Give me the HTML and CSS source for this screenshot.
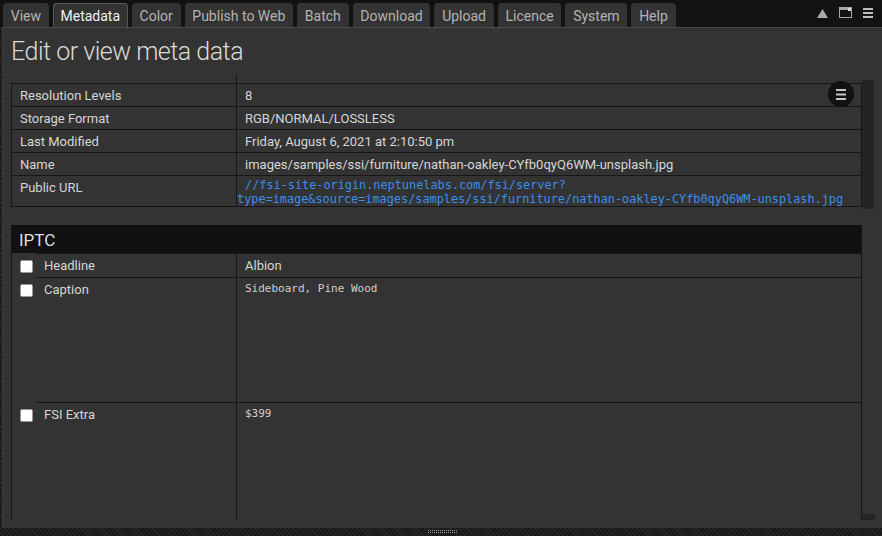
FILE: index.html
```html
<!DOCTYPE html>
<html lang="en">
<head>
<meta charset="utf-8">
<title>Metadata</title>
<link rel="stylesheet" href="styles.css">
</head>
<body>
<div class="app">
  <header class="topbar">
    <nav class="tabs">
      <div class="tab">View</div>
      <div class="tab active">Metadata</div>
      <div class="tab">Color</div>
      <div class="tab">Publish to Web</div>
      <div class="tab">Batch</div>
      <div class="tab">Download</div>
      <div class="tab">Upload</div>
      <div class="tab">Licence</div>
      <div class="tab">System</div>
      <div class="tab">Help</div>
    </nav>
    <div class="tools">
      <svg class="ico-up" width="11" height="9" viewBox="0 0 11 9"><polygon points="5.5,0 11,9 0,9" fill="#a8a8a8"/></svg>
      <svg class="ico-win" width="13" height="11" viewBox="0 0 13 11"><rect x="0.5" y="0.5" width="12" height="10" fill="none" stroke="#a8a8a8"/><rect x="0" y="0" width="13" height="3" fill="#a8a8a8"/><rect x="9" y="1" width="3" height="3" fill="#dcdcdc"/></svg>
      <svg class="ico-menu" width="10" height="10" viewBox="0 0 10 10"><rect x="0" y="0" width="10" height="2" fill="#bdbdbd"/><rect x="0" y="4" width="10" height="2" fill="#bdbdbd"/><rect x="0" y="8" width="10" height="2" fill="#bdbdbd"/></svg>
    </div>
  </header>

  <main class="panel">
    <h1 class="title">Edit or view meta data</h1>
    <div class="scroller">
      <div class="content">
        <div class="stub"></div>
        <div class="props">
          <div class="prow"><div class="pkey">Resolution Levels</div><div class="pval">8</div></div>
          <div class="prow"><div class="pkey">Storage Format</div><div class="pval">RGB/NORMAL/LOSSLESS</div></div>
          <div class="prow"><div class="pkey">Last Modified</div><div class="pval">Friday, August 6, 2021 at 2:10:50 pm</div></div>
          <div class="prow"><div class="pkey">Name</div><div class="pval">images/samples/ssi/furniture/nathan-oakley-CYfb0qyQ6WM-unsplash.jpg</div></div>
          <div class="prow url-row"><div class="pkey">Public URL</div><div class="pval"><a class="url" href="#"><span class="url-line first">//fsi-site-origin.neptunelabs.com/fsi/server?</span><span class="url-line">type=image&amp;source=images/samples/ssi/furniture/nathan-oakley-CYfb0qyQ6WM-unsplash.jpg</span></a></div></div>
        </div>

        <section class="iptc">
          <div class="iptc-head">IPTC</div>
          <div class="irow short">
            <div class="icb"><input type="checkbox" class="cb"></div>
            <div class="ilabel">Headline</div>
            <div class="ivalue">Albion</div>
          </div>
          <div class="irow tall">
            <div class="icb"><input type="checkbox" class="cb"></div>
            <div class="ilabel">Caption</div>
            <div class="ivalue mono">Sideboard, Pine Wood</div>
          </div>
          <div class="irow rest">
            <div class="icb"><input type="checkbox" class="cb"></div>
            <div class="ilabel">FSI Extra</div>
            <div class="ivalue mono">$399</div>
          </div>
        </section>
      </div>
      <div class="scrollbar">
        <div class="thumb"></div>
        <div class="sb-end"></div>
      </div>
      <button class="menu-btn" type="button" aria-label="Menu">
        <svg width="10" height="11" viewBox="0 0 10 11"><rect x="0" y="0" width="10" height="2" fill="#c4c4c4"/><rect x="0" y="4.5" width="10" height="2" fill="#c4c4c4"/><rect x="0" y="9" width="10" height="2" fill="#c4c4c4"/></svg>
      </button>
    </div>
  </main>

  <footer class="resize"><span class="grip"></span></footer>
</div>
</body>
</html>
```

FILE: styles.css
```css
* { box-sizing: border-box; }

html, body {
  margin: 0;
  padding: 0;
}

body {
  width: 882px;
  height: 536px;
  overflow: hidden;
  background: repeating-linear-gradient(45deg, #191919 0 2px, #2a2a2a 2px 3px);
  font-family: Roboto, "Noto Sans", sans-serif;
  color: #d6d6d6;
}

.app {
  display: flex;
  flex-direction: column;
  height: 536px;
}

/* ---------- top bar ---------- */
.topbar {
  flex: none;
  height: 27px;
  background: #121212;
  display: flex;
  justify-content: space-between;
  align-items: flex-end;
  padding: 0 9px 0 3px;
}

.tabs {
  display: flex;
  gap: 4px;
}

.tab {
  height: 24px;
  padding: 5px 7.75px 0;
  font-size: 14px;
  line-height: 16px;
  color: #b3b3b3;
  background: #333;
  border-radius: 4px 4px 0 0;
  white-space: nowrap;
}

.tab.active {
  color: #eef2f6;
  box-shadow: inset 1px 1px 0 #575757, inset -1px 0 0 #575757;
}

.tools {
  align-self: flex-start;
  margin-top: 7px;
  display: flex;
  align-items: flex-start;
  gap: 11px;
}

.tools svg { display: block; }
.ico-up { margin-top: 2px; }
.ico-menu { margin-top: 1px; }

/* ---------- panel ---------- */
.panel {
  flex: 1;
  min-height: 0;
  margin-left: 2px;
  background: #333;
  border-top: 1px solid #4a4a4a;
  border-left: 1px solid #3c3c3c;
  padding: 0 7px 8px 8px;
  display: flex;
  flex-direction: column;
}

.title {
  margin: 9px 0 8px;
  font-size: 25px;
  letter-spacing: -0.5px;
  line-height: 30px;
  font-weight: 300;
  color: #dadada;
}

.scroller {
  flex: 1;
  min-height: 0;
  display: flex;
  position: relative;
}

.content {
  width: 851px;
  flex: none;
  overflow: hidden;
}

.stub {
  height: 8px;
  margin-left: 225px;
  border-left: 1px solid #161616;
}

/* ---------- property table ---------- */
.props {
  border: 1px solid #161616;
  font-size: 13px;
}

.prow {
  display: grid;
  grid-template-columns: 225px 1fr;
}

.prow + .prow { border-top: 1px solid #161616; }

.pkey, .pval {
  height: 22px;
  line-height: 24px;
  padding: 0 8px;
  white-space: nowrap;
  overflow: hidden;
}

.pkey { border-right: 1px solid #161616; }

.url-row .pkey,
.url-row .pval {
  height: 30px;
}

.url-row .pkey {
  line-height: 15px;
  padding-top: 4px;
}

.url-row .pval {
  padding: 2px 0 0;
  line-height: 14px;
  overflow: visible;
}

.url {
  display: block;
  color: #3c8fec;
  text-decoration: none;
  font-family: "DejaVu Sans Mono", "Liberation Mono", monospace;
  font-size: 11.85px;
}

.url-line { display: block; white-space: nowrap; }
.url-line.first { padding-left: 8px; }

/* ---------- IPTC ---------- */
.iptc {
  margin-top: 18px;
  font-size: 13px;
}

.iptc-head {
  height: 28px;
  background: #111;
  padding: 1px 0 0 8px;
  font-size: 17px;
  line-height: 28px;
  color: #dedede;
}

.irow {
  display: grid;
  grid-template-columns: 24px 201px 1fr;
  border-left: 1px solid #161616;
  border-right: 1px solid #161616;
}

.irow.short { height: 24px; }
.irow.tall { height: 125px; }
.irow.rest { height: 200px; }

.icb {
  border-top: 1px solid transparent;
  padding: 6px 0 0 8px;
}

.ilabel, .ivalue {
  border-top: 1px solid #161616;
  padding: 4px 8px 0;
  line-height: 15px;
}

.ilabel { border-right: 1px solid #161616; }

.ivalue.mono {
  font-family: "DejaVu Sans Mono", "Liberation Mono", monospace;
  font-size: 11px;
  line-height: 13px;
  color: #cfcfcf;
}

.cb {
  appearance: none;
  -webkit-appearance: none;
  display: block;
  margin: 0;
  width: 13px;
  height: 13px;
  background: #fff;
  border: 1px solid #9a9a9a;
  border-radius: 2px;
}

/* ---------- fake scrollbar ---------- */
.scrollbar {
  width: 13px;
  flex: none;
  display: flex;
  flex-direction: column;
}

.thumb {
  margin-top: 5px;
  width: 12px;
  height: 129px;
  background: #242424;
}

.sb-end {
  margin-top: auto;
  width: 13px;
  height: 6px;
  background: #262626;
}

.menu-btn {
  position: absolute;
  top: 6px;
  right: 21px;
  width: 26px;
  height: 26px;
  border: 0;
  padding: 0;
  border-radius: 50%;
  background: #111;
  display: flex;
  align-items: center;
  justify-content: center;
}

.menu-btn svg { display: block; }

/* ---------- bottom resize strip ---------- */
.resize {
  flex: none;
  height: 8px;
  display: flex;
  justify-content: center;
  padding: 2px 0 0 2px;
}

.grip {
  display: block;
  width: 30px;
  height: 4px;
  background: conic-gradient(#9a9a9a 25%, transparent 0) 0 0 / 2px 2px;
}
```
